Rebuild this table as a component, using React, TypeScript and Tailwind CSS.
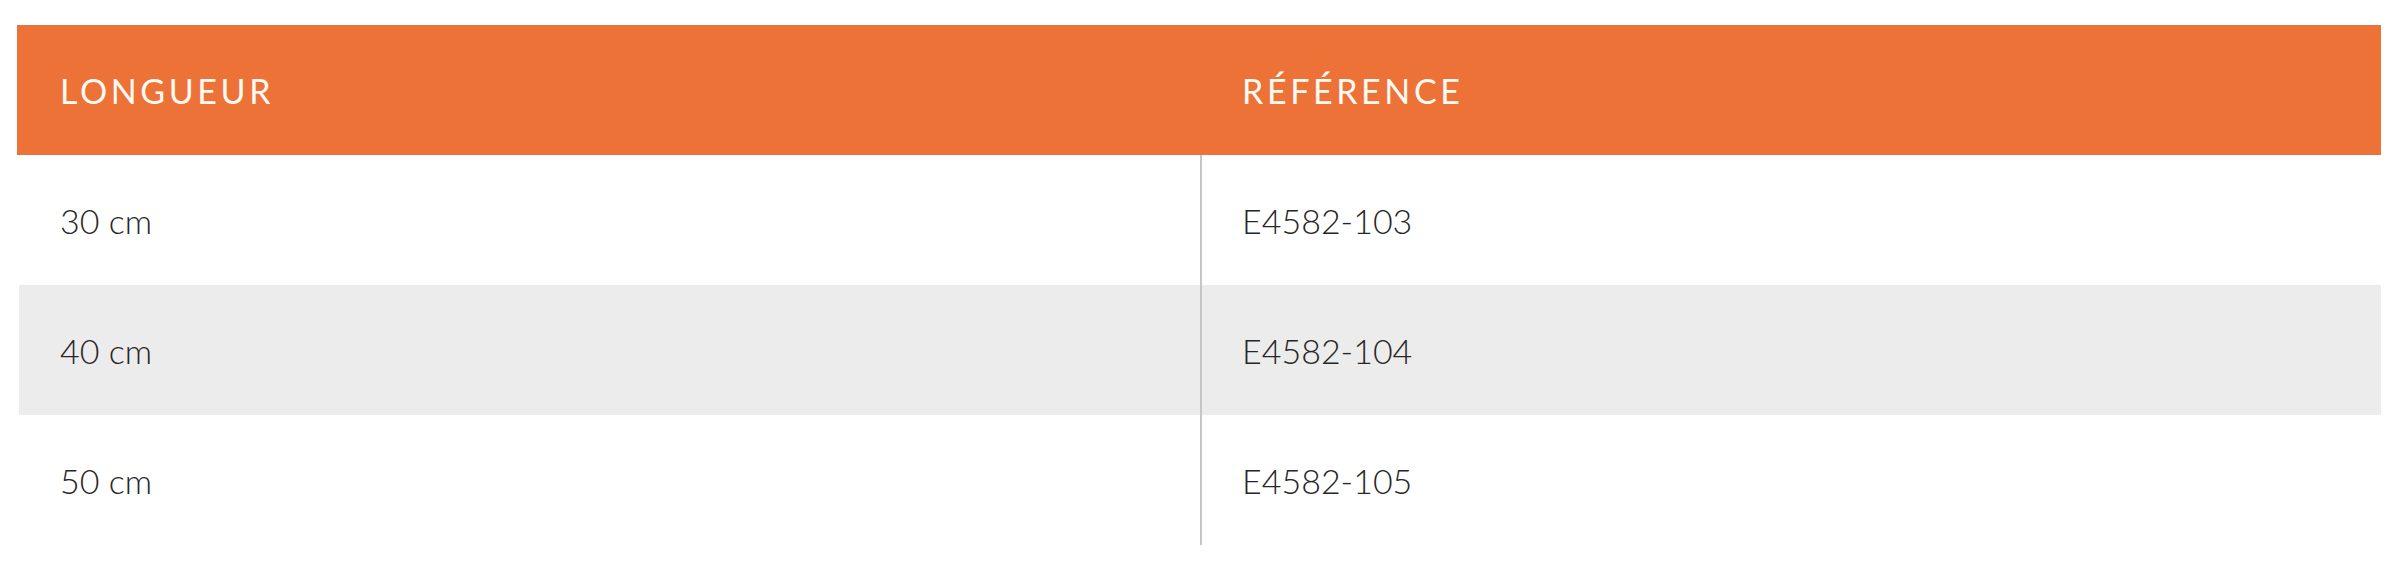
const rows = [
  { length: '30 cm', ref: 'E4582-103' },
  { length: '40 cm', ref: 'E4582-104' },
  { length: '50 cm', ref: 'E4582-105' },
]

export default function App() {
  return (
    <div className="w-[2399px] h-[571px] bg-white pt-[25px] pl-[17px] font-['Lato','Open_Sans',sans-serif]">
      <div className="w-[2364px]">
        {/* header */}
        <div className="grid grid-cols-[1183px_1fr] h-[130px] bg-[#ed7237] text-[#fffaf3] text-[34px] tracking-[3.6px] items-center">
          <div className="pl-[43px]">LONGUEUR</div>
          <div className="pl-[42px]">RÉFÉRENCE</div>
        </div>

        {rows.map((row, i) => (
          <div
            key={row.ref}
            className={`ml-[2px] grid grid-cols-[1181px_1fr] h-[130px] text-[34px] font-light text-[#262626] ${
              i % 2 === 1 ? 'bg-[#ececec]' : 'bg-white'
            }`}
          >
            <div className="pl-[41px] flex items-center">{row.length}</div>
            <div className="pl-[40px] flex items-center border-l-2 border-[#c6c6c6]">{row.ref}</div>
          </div>
        ))}
      </div>
    </div>
  )
}
